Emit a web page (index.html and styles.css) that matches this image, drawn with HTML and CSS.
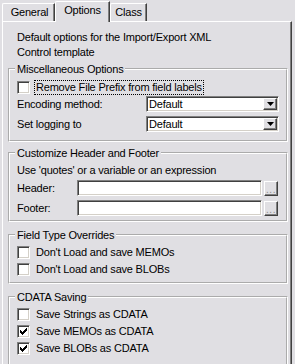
FILE: index.html
```html
<!DOCTYPE html>
<html lang="en">
<head>
    <meta charset="UTF-8">
    <title>XML Control Properties</title>
    <link rel="stylesheet" href="styles.css">
</head>
<body>
    <div class="dialog">
        <div class="tabs">
            <div class="tab tab-general">General</div>
            <div class="tab tab-options active">Options</div>
            <div class="tab tab-class">Class</div>
        </div>

        <div class="panel">
            <p class="intro">Default options for the Import/Export XML<br>Control template</p>

            <fieldset class="group group-misc">
                <legend>Miscellaneous Options</legend>
                <div class="check-row">
                    <span class="check"></span>
                    <span class="check-text focus">Remove File Prefix from field labels</span>
                </div>
                <div class="field-row">
                    <span class="field-label wide">Encoding method:</span>
                    <div class="combo">
                        <span class="combo-value">Default</span>
                        <span class="combo-btn"><svg width="7" height="4" viewBox="0 0 7 4"><path d="M0 0h7l-3.5 4z" fill="#000"/></svg></span>
                    </div>
                </div>
                <div class="field-row second">
                    <span class="field-label wide">Set logging to</span>
                    <div class="combo">
                        <span class="combo-value">Default</span>
                        <span class="combo-btn"><svg width="7" height="4" viewBox="0 0 7 4"><path d="M0 0h7l-3.5 4z" fill="#000"/></svg></span>
                    </div>
                </div>
            </fieldset>

            <fieldset class="group group-header">
                <legend>Customize Header and Footer</legend>
                <div class="hint">Use 'quotes' or a variable or an expression</div>
                <div class="field-row edit-row">
                    <span class="field-label">Header:</span>
                    <span class="edit"></span>
                    <span class="dots-btn">...</span>
                </div>
                <div class="field-row edit-row second">
                    <span class="field-label">Footer:</span>
                    <span class="edit"></span>
                    <span class="dots-btn">...</span>
                </div>
            </fieldset>

            <fieldset class="group group-fields">
                <legend>Field Type Overrides</legend>
                <div class="check-row">
                    <span class="check"></span>
                    <span class="check-text">Don't Load and save MEMOs</span>
                </div>
                <div class="check-row">
                    <span class="check"></span>
                    <span class="check-text">Don't Load and save BLOBs</span>
                </div>
            </fieldset>

            <fieldset class="group group-cdata">
                <legend>CDATA Saving</legend>
                <div class="check-row">
                    <span class="check"></span>
                    <span class="check-text">Save Strings as CDATA</span>
                </div>
                <div class="check-row">
                    <span class="check checked"><svg width="7" height="7" viewBox="0 0 7 7"><path d="M0 2H1V3H2V4H3V3H4V2H5V1H6V0H7V3H6V4H5V5H4V6H3V7H2V6H1V5H0Z" fill="#000"/></svg></span>
                    <span class="check-text">Save MEMOs as CDATA</span>
                </div>
                <div class="check-row">
                    <span class="check checked"><svg width="7" height="7" viewBox="0 0 7 7"><path d="M0 2H1V3H2V4H3V3H4V2H5V1H6V0H7V3H6V4H5V5H4V6H3V7H2V6H1V5H0Z" fill="#000"/></svg></span>
                    <span class="check-text">Save BLOBs as CDATA</span>
                </div>
            </fieldset>
        </div>
    </div>
</body>
</html>
```

FILE: styles.css
```css
body {
    margin: 0;
    background-color: #e0dfe3;
    font-family: "Liberation Sans", Arial, sans-serif;
    font-size: 11px;
    letter-spacing: -0.2px;
    color: #000;
}

.dialog {
    padding-left: 2px;
    width: 290px;
}

/* tab strip */
.tabs {
    display: flex;
    align-items: flex-end;
    height: 21px;
}

.tab {
    box-sizing: border-box;
    height: 18px;
    line-height: 17px;
    text-align: center;
    border-top: 1px solid #fff;
    border-left: 1px solid #fff;
    border-right: 1px solid #404040;
    border-top-left-radius: 2px;
    box-shadow: inset -1px 0 #808080;
}

.tab-general { width: 53px; padding-left: 2px; }
.tab-options { width: 55px; }
.tab-class { width: 37px; }

.tab.active {
    position: relative;
    z-index: 1;
    height: 21px;
    line-height: 17px;
    margin-bottom: -1px;
    background-color: #e0dfe3;
}

.panel {
    box-sizing: border-box;
    width: 290px;
    min-height: 343px;
    border-top: 1px solid #fff;
    border-left: 1px solid #fff;
    border-right: 1px solid #404040;
    box-shadow: inset -1px 0 #808080;
    padding-top: 8px;
}

.intro {
    margin: 0;
    padding-left: 14px;
    line-height: 15px;
}

/* group boxes */
.group {
    margin: 2px 3px 0 5px;
    padding: 3px 0 8px 7px;
    border: 2px groove #fff;
    min-width: 0;
}

.group legend {
    padding: 0 2px;
    margin-left: -2px;
    line-height: 14px;
    height: 14px;
}

.group-header { margin-top: 4px; padding-bottom: 4px; }
.group-fields { margin-top: 6px; padding-top: 2px; padding-bottom: 4px; }
.group-cdata { margin-top: 6px; padding-top: 2px; padding-bottom: 7px; }

.check-row {
    display: flex;
    align-items: center;
    height: 17px;
}

.group-misc .check-row { height: 16px; }

.check {
    box-sizing: border-box;
    width: 13px;
    height: 13px;
    background-color: #fff;
    border: 1px solid;
    border-color: #808080 #fff #fff #808080;
    box-shadow: inset 1px 1px #404040, inset -1px -1px #d4d0c8;
    display: flex;
    align-items: center;
    justify-content: center;
}

.check svg { display: block; }

.check-text {
    margin-left: 5px;
    padding: 0 1px;
    line-height: 13px;
}

.check-text.focus {
    outline: 1px dotted #000;
}

.field-row {
    display: flex;
    align-items: center;
    margin-top: 1px;
}

.field-row.second { margin-top: 4px; }

.field-label { width: 60px; }
.field-label.wide { width: 129px; }

.combo {
    box-sizing: border-box;
    width: 133px;
    height: 16px;
    background-color: #fff;
    border: 1px solid;
    border-color: #808080 #fff #fff #808080;
    box-shadow: inset 1px 1px #404040, inset -1px -1px #d4d0c8;
    display: flex;
    align-items: center;
    padding: 1px 1px 1px 2px;
}

.combo-value { flex: 1; line-height: 12px; }

.combo-btn {
    box-sizing: border-box;
    width: 14px;
    height: 12px;
    background-color: #e0dfe3;
    border: 1px solid;
    border-color: #fff #404040 #404040 #fff;
    box-shadow: inset -1px -1px #808080;
    display: flex;
    align-items: center;
    justify-content: center;
}

.combo-btn svg { display: block; }

.hint { line-height: 14px; }

.edit-row { margin-top: 3px; }

.edit {
    box-sizing: border-box;
    width: 185px;
    height: 16px;
    background-color: #fff;
    border: 1px solid;
    border-color: #808080 #fff #fff #808080;
    box-shadow: inset 1px 1px #404040, inset -1px -1px #d4d0c8;
}

.dots-btn {
    box-sizing: border-box;
    width: 14px;
    height: 15px;
    margin-left: 2px;
    overflow: hidden;
    border: 1px solid;
    border-color: #fff #404040 #404040 #fff;
    box-shadow: inset -1px -1px #808080;
    color: #8c8c8c;
    font-size: 10px;
    line-height: 16px;
    text-align: center;
    letter-spacing: 0.5px;
}
```
